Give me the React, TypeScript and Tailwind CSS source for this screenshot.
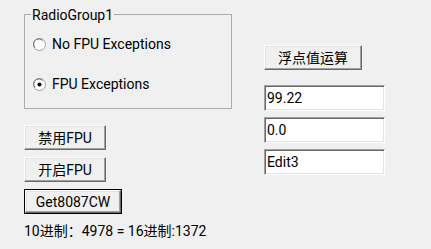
import React from 'react';

const font = { fontFamily: 'Roboto, "Noto Sans CJK SC", sans-serif' };

function Radio({ checked, label }: { checked?: boolean; label: string }) {
  return (
    <div className="flex items-center h-[18px]">
      <svg width="13" height="13" viewBox="0 0 13 13" className="ml-[8px] mr-[6px] shrink-0">
        <circle cx="6.5" cy="6.5" r="6" fill="#ffffff" stroke="#a0a0a0" />
        <path d="M2 9.5 A4.5 4.5 0 0 1 9.5 2.5" fill="none" stroke="#696969" />
        {checked && <circle cx="6.5" cy="6.5" r="2" fill="#000000" />}
      </svg>
      <span className="text-[14px] leading-none text-black">{label}</span>
    </div>
  );
}

function Button({ label, width, isDefault }: { label: string; width: string; isDefault?: boolean }) {
  const inner = (
    <div className="h-full w-full flex items-center justify-center bg-[#f0f0f0] border-t border-l border-t-white border-l-white border-r border-b border-r-[#696969] border-b-[#696969] shadow-[inset_-1px_-1px_0_#a0a0a0,inset_1px_1px_0_#e3e3e3] text-[14px] leading-none text-black">
      {label}
    </div>
  );
  if (isDefault) {
    return <div className={`${width} h-[25px] border border-black`}>{inner}</div>;
  }
  return <div className={`${width} h-[25px]`}>{inner}</div>;
}

function Edit({ value }: { value: string }) {
  return (
    <div className="w-[121px] h-[26px] bg-white border-t border-l border-t-[#a0a0a0] border-l-[#a0a0a0] border-r border-b border-r-white border-b-white shadow-[inset_1px_1px_0_#696969,inset_-1px_-1px_0_#e3e3e3] flex items-center pl-[2px] text-[14px] leading-none text-black">
      {value}
    </div>
  );
}

export default function App() {
  return (
    <div className="w-[431px] h-[249px] bg-[#f0f0f0] flex pl-[24px] gap-[32px] overflow-hidden" style={font}>
      <div className="w-[208px] flex flex-col">
        <div className="relative mt-[14px] h-[95px] border border-[#adadad] flex flex-col pt-[20px] gap-[22px]">
          <span className="absolute -top-[9px] left-[6px] px-[1px] bg-[#f0f0f0] text-[14px] leading-[18px] text-black">
            RadioGroup1
          </span>
          <Radio label="No FPU Exceptions" />
          <Radio label="FPU Exceptions" checked />
        </div>
        <div className="flex flex-col gap-[7px] mt-[16px]">
          <Button label="禁用FPU" width="w-[82px]" />
          <Button label="开启FPU" width="w-[82px]" />
          <Button label="Get8087CW" width="w-[98px]" isDefault />
        </div>
        <div className="mt-[8px] text-[14px] leading-[18px] text-black whitespace-nowrap">
          10进制：4978 = 16进制:1372
        </div>
      </div>
      <div className="flex flex-col pt-[45px]">
        <Button label="浮点值运算" width="w-[98px]" />
        <div className="flex flex-col gap-[6px] mt-[15px]">
          <Edit value="99.22" />
          <Edit value="0.0" />
          <Edit value="Edit3" />
        </div>
      </div>
    </div>
  );
}
